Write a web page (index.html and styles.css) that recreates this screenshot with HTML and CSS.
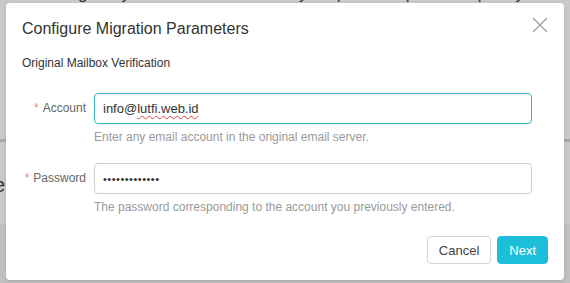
FILE: index.html
```html
<!DOCTYPE html>
<html lang="en">
<head>
  <meta charset="UTF-8">
  <title>Configure Migration Parameters</title>
  <link rel="stylesheet" href="styles.css">
</head>
<body>

  <div class="backdrop">
    <div class="bg-text">Migrate your mailbox data from your previous provider quickly</div>
    <div class="bg-rule"></div>
    <div class="bg-word">e</div>
    <div class="bg-shade"></div>
  </div>

  <div class="modal">
    <div class="modal-header">
      <h2 class="modal-title">Configure Migration Parameters</h2>
      <button class="close-btn" aria-label="Close">
        <svg width="16" height="16" viewBox="0 0 16 16">
          <path d="M1 1 L15 15 M15 1 L1 15" stroke="#9a9a9a" stroke-width="1.2" fill="none"/>
        </svg>
      </button>
    </div>

    <div class="section-title">Original Mailbox Verification</div>

    <div class="form">
      <label class="form-label"><span class="req">*</span>Account</label>
      <div class="form-field">
        <div class="input focused"><span class="typed">info@<span class="misspelt">lutfi.web.id</span></span></div>
        <div class="help">Enter any email account in the original email server.</div>
      </div>

      <label class="form-label"><span class="req">*</span>Password</label>
      <div class="form-field">
        <div class="input"><span class="dots">•••••••••••••</span></div>
        <div class="help">The password corresponding to the account you previously entered.</div>
      </div>
    </div>

    <div class="modal-footer">
      <button class="btn">Cancel</button>
      <button class="btn btn-primary">Next</button>
    </div>
  </div>

</body>
</html>
```

FILE: styles.css
```css
* {
  box-sizing: border-box;
}

body {
  margin: 0;
  width: 570px;
  height: 283px;
  overflow: hidden;
  position: relative;
  background-color: #c9c9c9;
  font-family: "Liberation Sans", Arial, sans-serif;
  padding: 3px 6px 0;
}

/* page behind the dialog, dimmed */
.backdrop {
  position: absolute;
  inset: 0;
}

.bg-text {
  position: absolute;
  top: -16px;
  left: 60px;
  font-size: 17px;
  line-height: 20px;
  color: #3a3a3a;
  white-space: nowrap;
}

.bg-rule {
  position: absolute;
  top: 139px;
  left: 0;
  right: 0;
  height: 3px;
  background-color: #a9a9a9;
}

.bg-word {
  position: absolute;
  top: 174px;
  left: -6px;
  font-size: 20px;
  color: #333;
}

.bg-shade {
  position: absolute;
  top: 224px;
  left: 0;
  right: 0;
  bottom: 0;
  background-color: #c0c0c0;
}

.modal {
  position: relative;
  width: 558px;
  height: 277px;
  background-color: #fff;
  border-radius: 4px;
  box-shadow: 0 1px 3px rgba(0, 0, 0, 0.15);
  padding: 14px 16px 16px;
  display: flex;
  flex-direction: column;
}

.modal-header {
  display: flex;
  justify-content: space-between;
  align-items: flex-start;
}

.modal-title {
  margin: 0;
  font-size: 16px;
  font-weight: normal;
  line-height: 24px;
  color: #333;
}

.close-btn {
  border: none;
  background: none;
  padding: 0;
  margin: 0;
  width: 16px;
  height: 16px;
  cursor: pointer;
}

.section-title {
  margin-top: 13px;
  font-size: 12px;
  line-height: 18px;
  color: #333;
}

.form {
  margin-top: 21px;
  padding-right: 16px;
  display: grid;
  grid-template-columns: 64px 1fr;
  column-gap: 8px;
  row-gap: 17px;
}

.form-label {
  text-align: right;
  font-size: 12px;
  line-height: 31px;
  color: #666;
  white-space: nowrap;
}

.req {
  color: #f08a8a;
  margin-right: 4px;
}

.input {
  height: 31px;
  border: 1px solid #cfcfcf;
  border-radius: 4px;
  padding: 0 8px;
  font-size: 13px;
  line-height: 29px;
  color: #333;
}

.input.focused {
  border-color: #3bb2c4;
}

.misspelt {
  text-decoration: underline wavy #e0443e;
  text-decoration-thickness: 1px;
  text-underline-offset: 2px;
}

.dots {
  font-size: 11px;
  letter-spacing: 0.5px;
  color: #333;
}

.help {
  margin-top: 4px;
  font-size: 12px;
  line-height: 18px;
  color: #9a9a9a;
}

.modal-footer {
  margin-top: auto;
  display: flex;
  justify-content: flex-end;
  gap: 6px;
}

.btn {
  height: 28px;
  padding: 0 11px;
  border: 1px solid #d4d4d4;
  border-radius: 4px;
  background-color: #fff;
  font-family: inherit;
  font-size: 13px;
  color: #444;
  cursor: pointer;
}

.btn-primary {
  background-color: #1bbfd9;
  border-color: #1bbfd9;
  color: #fff;
}
```
